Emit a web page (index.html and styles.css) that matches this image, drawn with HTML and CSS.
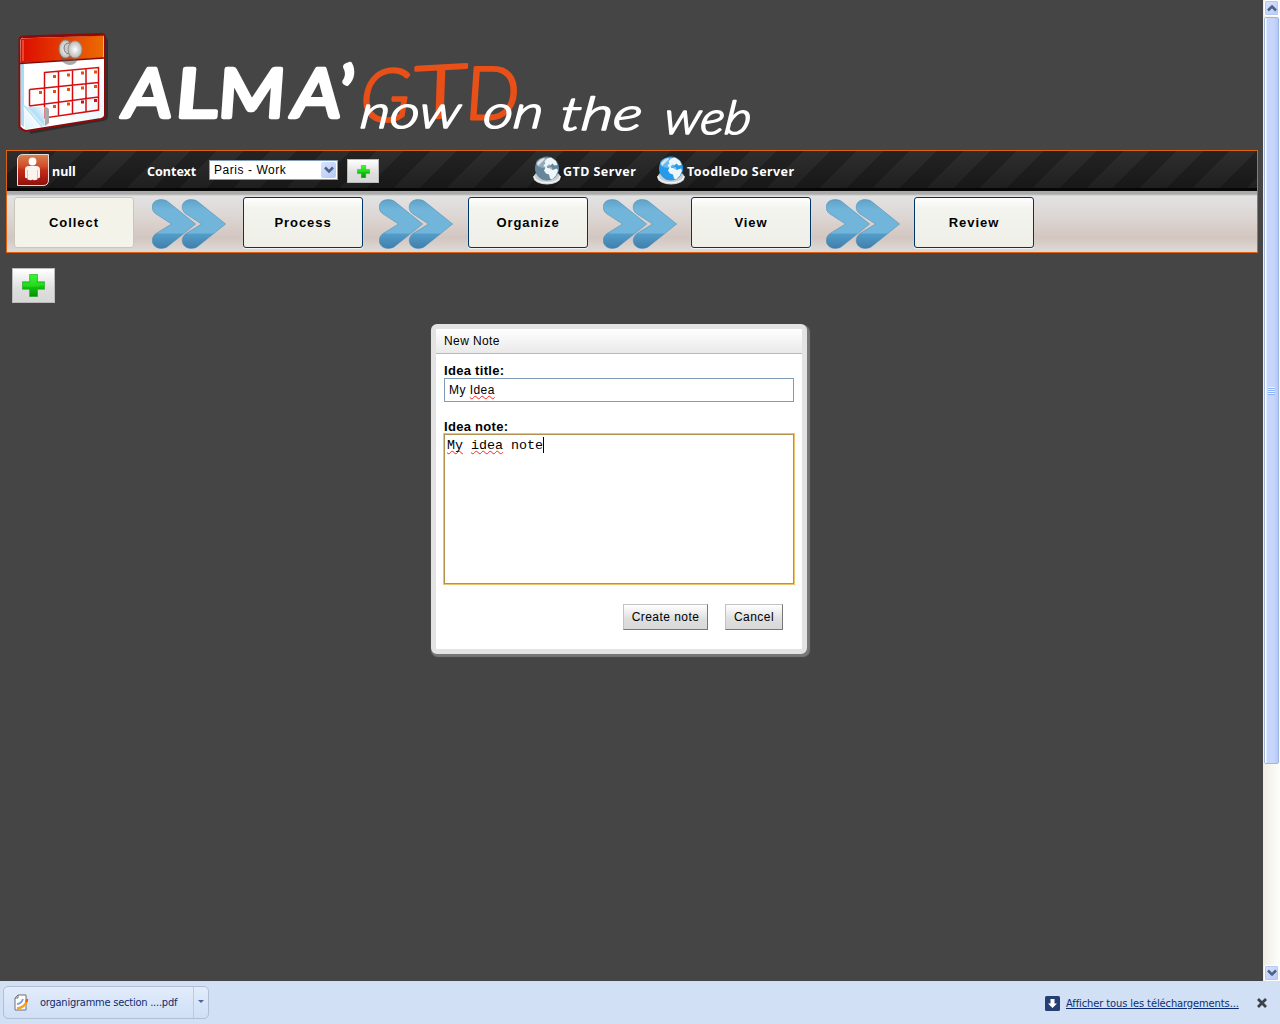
FILE: index.html
```html
<!DOCTYPE html>
<html lang="fr">
<head>
<meta charset="utf-8">
<title>ALMA'GTD</title>
<link rel="stylesheet" href="styles.css">
</head>
<body>
<svg class="defs" width="0" height="0" aria-hidden="true">
  <defs>
    <linearGradient id="green" x1="0" y1="0" x2="0" y2="1"><stop offset="0" stop-color="#34f52d"/><stop offset=".5" stop-color="#12cc0e"/><stop offset="1" stop-color="#078f05"/></linearGradient>
    <linearGradient id="blue" x1="0" y1="0" x2="0" y2="1"><stop offset="0" stop-color="#5fa3ca"/><stop offset=".2" stop-color="#72b5da"/><stop offset=".69" stop-color="#72b5da"/><stop offset=".7" stop-color="#539dca"/><stop offset="1" stop-color="#417fac"/></linearGradient>
    <symbol id="plus" viewBox="0 0 22 22"><path d="M7.3.5h7.5v7h6.700v7h-6.700v7H7.300v-7H.5v-7h6.800z" fill="url(#green)" stroke="#0ba60a" stroke-opacity=".55"/><path d="M8 1.500h6v7h7v2.500q-10 2-20 1v-3.500h7z" fill="#5cff50" opacity=".25"/></symbol>
    <symbol id="arrows" viewBox="0 0 74 50">
      <g fill="url(#blue)" stroke="#4c87ad" stroke-opacity=".5">
        <path d="M9 .6C-.5.600-2.500 10.500 4 15L19.500 25 4 34.500C-3 40 .5 49.400 9 49.400c4 0 6-1.300 8-3L43.600 25 17 3.600C15 1.800 13 .6 9 .6z"/>
        <path transform="translate(30)" d="M9 .6C-.5.600-2.500 10.500 4 15L19.500 25 4 34.500C-3 40 .5 49.400 9 49.400c4 0 6-1.300 8-3L43.600 25 17 3.600C15 1.800 13 .6 9 .6z"/>
      </g>
    </symbol>
    <symbol id="globe" viewBox="0 0 28 29">
      <ellipse cx="14" cy="21.500" rx="13.500" ry="7" fill="#c9ced2"/><path d="M1 20c1 9 25 9 26 0" fill="none" stroke="#f2f4f5" stroke-width="1.500"/>
      <circle cx="14" cy="12.500" r="12" fill="currentColor"/>
      <ellipse cx="11" cy="7" rx="8" ry="5" fill="#fff" opacity=".3"/>
      <path d="M14 2.500l4-1 5 3.500 1.500 4-3 .5-2-2-2 1.500-2-.5-2 2 1 1.500 4-.5 1.500 1.500 4-.5 1 2-2 5-4 4-2-1-1-4-3-1-2-3 1.500-3-2-2 2-2-1-2z" fill="#eef6f9"/>
      <path d="M4 7q3-4 7-5l1 1-4 4-3 3z" fill="#eaf5fa" opacity=".8"/>
      <path d="M16 12l3 .5 4-2 1 1.500-4 2z" fill="currentColor"/>
    </symbol>
    <symbol id="down" viewBox="0 0 10 8"><path d="M1 1.500l4 4 4-4" fill="none" stroke="#4d6185" stroke-width="2.500"/></symbol>
  </defs>
</svg>
<div class="viewport">
  <main class="page">
    <header class="banner">
      <svg width="800" height="150" viewBox="0 0 800 150">
        <defs>
          <linearGradient id="cal" x1="0" x2="1"><stop offset="0" stop-color="#dc0c00"/><stop offset="1" stop-color="#ec6b00"/></linearGradient>
          <linearGradient id="paper" x1="0" y1="0" x2="1" y2="1"><stop offset="0" stop-color="#fff"/><stop offset=".65" stop-color="#fff"/><stop offset="1" stop-color="#e5f4fd"/></linearGradient>
          <linearGradient id="curl" x1="0" y1="1" x2="1" y2="0"><stop offset="0" stop-color="#d8f0fc"/><stop offset=".45" stop-color="#f4fbff"/><stop offset=".6" stop-color="#b4def4"/><stop offset="1" stop-color="#fff"/></linearGradient>
          <radialGradient id="pin"><stop offset="0" stop-color="#fff"/><stop offset="1" stop-color="#b9b9b9"/></radialGradient>
        </defs>
        <path d="M23 38L103 36Q108 37 108 42V116Q108 120 103 121L30 134z" fill="#222" opacity=".65"/>
        <path d="M23 36.500L101 34Q105 34 105 38V115Q105 118 101 119L26 131Q22 130 19.500 127V40Q19.500 37 23 36.500z" fill="url(#paper)" stroke="#8e0a08" stroke-width="2"/>
        <path d="M20.500 64H24V127L21 125z" fill="#a7dcf6"/>
        <path d="M21 38.500L103.500 35.500V58L20.500 63z" fill="url(#cal)"/><path d="M20 63.500L104 58" stroke="#850909" stroke-width="1.500"/>
        <path d="M22.500 37.200L103 34.800" stroke="#8e0a08" stroke-width="2"/>
        <path d="M23 61V40" stroke="#f45b32" stroke-width="1.500"/>
        <path d="M44.500 72.500L98.500 67.500V110L44.500 118zM58.500 71V116M72.500 70V114M86 69V112M29.500 89.500L98.500 82.500M29.500 106L98.500 97M29.500 89.500V106M44.500 88V118" fill="none" stroke="#d40e0e" stroke-width="1.500"/>
        <path d="M53 75h3v3h-3zM67 73.500h3v3h-3zM81 71.500h3v3h-3zM94 70.500h3v3h-3zM39 91h3v3h-3zM53 90h3v3h-3zM67 88h3v3h-3zM81 86.500h3v3h-3zM94 85h3v3h-3zM53 105h3v3h-3zM67 102.500h3v3h-3z" fill="#e65008"/>
        <path d="M81 100.500h3v3h-3zM94 99h3v3h-3z" fill="#d01010"/>
        <path d="M45 107q5 0 4 6v10l-4 3z" fill="#aaa"/>
        <path d="M23.500 105q5 3 11 2h10v19L25 129z" fill="url(#curl)"/><path d="M23.500 105L42 127" stroke="#a6d9f3" stroke-width="1"/>
        <path d="M60 57q10 3 18 0-1 8-8 8t-10-8z" fill="#555" opacity=".5"/>
        <ellipse cx="65.500" cy="49" rx="6.500" ry="9" fill="url(#pin)" stroke="#888"/>
        <path d="M70 43q-6 0-6 5t5 6z" fill="#ccc" stroke="#777"/>
        <ellipse cx="75" cy="49.500" rx="7" ry="8.500" fill="url(#pin)" stroke="#929292"/>
        <g class="logo-alma">
          <text transform="translate(121 117) skewX(-8)" textLength="48" lengthAdjust="spacingAndGlyphs">A</text>
          <text transform="translate(174 117) skewX(-5)" textLength="42" lengthAdjust="spacingAndGlyphs">L</text>
          <text transform="translate(217 117) skewX(-4)" textLength="67" lengthAdjust="spacingAndGlyphs">M</text>
          <text transform="translate(290 117) skewX(-8)" textLength="48" lengthAdjust="spacingAndGlyphs">A</text>
          <text transform="translate(341 116)">’</text>
        </g>
        <g class="logo-gtd">
          <text transform="translate(357 121) skewX(-9)" textLength="50" lengthAdjust="spacingAndGlyphs">G</text>
          <text transform="translate(413 119) rotate(-3) skewX(-5)" textLength="53" lengthAdjust="spacingAndGlyphs">T</text>
          <text transform="translate(464 119) skewX(-4)" textLength="54" lengthAdjust="spacingAndGlyphs">D</text>
        </g>
        <g class="logo-script">
          <text transform="translate(359 128) skewX(-6)" textLength="100" lengthAdjust="spacingAndGlyphs">now</text>
          <text transform="translate(482 128) skewX(-6)" textLength="60" lengthAdjust="spacingAndGlyphs">on</text>
          <text transform="translate(559 130) skewX(-6)" textLength="82" lengthAdjust="spacingAndGlyphs">the</text>
          <text transform="translate(663 134) skewX(-6)" textLength="87" lengthAdjust="spacingAndGlyphs">web</text>
        </g>
      </svg>
    </header>
    <section class="panel">
      <div class="toolbar">
        <svg class="user" width="32" height="32" viewBox="0 0 32 32">
          <defs><linearGradient id="red" x1="0" y1="0" x2="0" y2="1"><stop offset="0" stop-color="#d98250"/><stop offset=".4" stop-color="#cf4a28"/><stop offset=".5" stop-color="#c52c1a"/><stop offset="1" stop-color="#8f100d"/></linearGradient></defs>
          <path d="M6 .5H31.500V26Q31.500 31.500 26 31.500H.5V6Q.5.500 6 .5z" fill="url(#red)" stroke="#e9dcd6"/>
          <circle cx="15.500" cy="7.500" r="3.900" fill="#fff"/><path d="M12 12h7q4 0 4 3.500V23q0 1.500-2.500 1v1.500q-4 1.500-5 0-1 1.500-5 0V24Q8 24.500 8 23v-7.500Q8 12 12 12z" fill="#fbf4ee"/><path d="M10.500 16v8M20.500 16v8" stroke="#dfa59a" stroke-width=".7"/>
        </svg>
        <span class="name">null</span>
        <span class="context">Context</span>
        <div class="select"><span>Paris - Work</span><i><svg width="10" height="8"><use href="#down"/></svg></i></div>
        <button class="push add-small"><svg width="13" height="13"><use href="#plus"/></svg></button>
        <svg class="globe gtd" width="28" height="29"><use href="#globe"/></svg>
        <span class="gtd-name">GTD Server</span>
        <svg class="globe toodle" width="28" height="29"><use href="#globe"/></svg>
        <span class="toodle-name">ToodleDo Server</span>
      </div>
      <nav class="steps">
        <button class="step current">Collect</button>
        <svg class="arrow" width="74" height="50"><use href="#arrows"/></svg>
        <button class="step">Process</button>
        <svg class="arrow" width="74" height="50"><use href="#arrows"/></svg>
        <button class="step">Organize</button>
        <svg class="arrow" width="74" height="50"><use href="#arrows"/></svg>
        <button class="step">View</button>
        <svg class="arrow" width="74" height="50"><use href="#arrows"/></svg>
        <button class="step">Review</button>
      </nav>
    </section>
    <button class="push add-big"><svg width="23" height="23"><use href="#plus"/></svg></button>
    <div class="dialog">
      <h2>New Note</h2>
      <div class="form">
        <label>Idea title:</label>
        <div class="field">My&nbsp;<span class="typo">Idea</span></div>
        <label>Idea note:</label>
        <div class="area"><span class="typo">My</span> <span class="typo">idea</span> <span class="last">note</span></div>
        <div class="actions"><button class="push create">Create note</button><button class="push cancel">Cancel</button></div>
      </div>
    </div>
  </main>
  <aside class="scrollbar">
    <div class="sb-btn"><svg class="up" width="10" height="8"><use href="#down"/></svg></div>
    <div class="thumb"><i></i></div>
    <div class="sb-btn"><svg width="10" height="8"><use href="#down"/></svg></div>
  </aside>
</div>
<footer class="shelf">
  <div class="download">
    <svg width="16" height="17" viewBox="0 0 16 17"><path d="M5 1h8v15H2V4z" fill="#fff" stroke="#6c7079"/><path d="M5 1v3H2" fill="none" stroke="#6c7079"/><path d="M4 10q4 0 6-5" fill="none" stroke="#6da5ea" stroke-width="2"/><path d="M4 14.500q8-1 10-8" fill="none" stroke="#ff9d16" stroke-width="2.500"/><path d="M13 8l1.500-3" stroke="#f05a10" stroke-width="2"/></svg>
    <span class="file">organigramme section ....pdf</span>
    <i class="more"></i>
  </div>
  <div class="all">
    <svg width="15" height="15" viewBox="0 0 15 15"><rect width="15" height="15" rx="1.500" fill="#263f73"/><path d="M5.500 3h4v4.500H12L7.500 12 3 7.500h2.500z" fill="#fff"/></svg>
    <a>Afficher tous les téléchargements...</a>
    <svg class="close" width="10" height="10" viewBox="0 0 10 10"><path d="M1 1l8 8M9 1L1 9" stroke="#3c4048" stroke-width="2.800"/></svg>
  </div>
</footer>
</body>
</html>
```
FILE: styles.css
```css
* { box-sizing: border-box; }
body { margin: 0; width: 1280px; height: 1024px; overflow: hidden; display: flex; flex-direction: column; font: 13px "Liberation Sans", Arial, sans-serif; color: #000; background: #454545; }
button { font: inherit; color: inherit; padding: 0; margin: 0; }
svg { display: block; flex: none; }
.defs { position: absolute; }
.viewport { height: 981px; display: flex; }
.page { position: relative; width: 1263px; background: #454545; }
.banner { height: 150px; }

.logo-alma { font: 400 67px Lato, sans-serif; fill: #fff; stroke: #fff; stroke-width: 4.5; stroke-linejoin: round; }
.logo-gtd { font: 300 73px Lato, sans-serif; fill: #e95018; stroke: #e95018; stroke-width: 2.8; stroke-linejoin: round; }
.logo-script { font: italic 300 46px Lato, sans-serif; fill: #fff; stroke: #fff; stroke-width: 1.6; stroke-linejoin: round; }

.panel { margin-left: 6px; width: 1252px; height: 103px; border: 1px solid #e0620e; }
.toolbar { height: 37px; display: flex; align-items: center; padding: 0 0 0 10px; color: #fff; font: bold 13px "Noto Sans", sans-serif;
  background: linear-gradient(rgba(0,0,0,0), rgba(0,0,0,.32)), repeating-linear-gradient(135deg, #2e2e2e 0 16.5px, #232323 16.500px 35.300px, #2e2e2e 35.300px 37.700px); }
.toolbar > span { white-space: nowrap; line-height: 18px; font-size: 12.500px; }
.user { margin-top: 1px; }
.name { margin-left: 3px; width: 95px; margin-top: 4px; }
.context { width: 62px; margin-top: 4px; }
.select { width: 129px; height: 20px; margin-top: 1px; border: 1px solid #7f9db9; background: #fff; color: #000; display: flex; align-items: center; justify-content: space-between; padding: 0 1px 0 4px; font: 12px "Liberation Sans", sans-serif; letter-spacing: .55px; }
.select i { width: 15px; height: 16px; border-radius: 2px; background: linear-gradient(135deg, #d7e2fe, #b4c8f6); display: flex; align-items: center; justify-content: center; }
.push { border: 1px solid; border-color: #c3c3c3 #777 #777 #c3c3c3; background: linear-gradient(#fff, #dedede 60%, #d8d8d8); display: flex; align-items: center; justify-content: center; }
.add-small { width: 32px; height: 24px; margin: 3px 0 0 9px; border-color: #bbb; }
.globe { margin-top: 1px; }
.gtd { margin-left: 154px; color: #66869b; }
.gtd-name { margin: 4px 0 0 2px; width: 93px; letter-spacing: .45px; }
.toodle { margin-left: 1px; color: #279be9; }
.toodle-name { margin: 4px 0 0 2px; letter-spacing: .4px; }

.steps { height: 64px; border-top: 3px solid #111; border-image: linear-gradient(#050505, #333 55%, #888) 3 0 0 0; background: linear-gradient(#aaa 0, #aaa 3px, #e2e2e2 5px, #ded9d7 35%, #d3c6c0 77%, #dcd7d4 96%); display: grid; grid-template-columns: 120px 109px 120px 105px 120px 103px 120px 103px 120px; align-items: start; justify-items: center; padding: 6px 0 0 7px; }
.step { width: 120px; height: 51px; border: 1px solid #003568; border-radius: 3px; background: linear-gradient(#fff, #f4f4ef 20%, #efefe8); font-weight: bold; letter-spacing: .95px; box-shadow: 0 1px 1px #f3f3f3; }
.current { border-color: #c9c7ba; background: #f3f3ea; box-shadow: none; }
.arrow { margin-top: 2px; }
.add-big { width: 43px; height: 35px; margin: 15px 0 0 12px; border-color: #bbb; }

.dialog { position: absolute; left: 431px; top: 324px; width: 376px; height: 330px; border: 5px solid #e3e3e3; border-radius: 6px; background: #fff; box-shadow: 1.500px 2px 1px 1px #777; }
.dialog h2 { margin: 0; height: 25px; padding-left: 8px; border-bottom: 1px solid #b9b9b9; background: linear-gradient(#fff, #e9e9e9); font: 12px/25px "Liberation Sans", sans-serif; letter-spacing: .4px; }
.form { padding: 9px 8px 0; display: flex; flex-direction: column; }
.form label { font-weight: bold; line-height: 15px; height: 15px; letter-spacing: .3px; }
.field { height: 24px; border: 1px solid #7f9db9; padding-left: 4px; line-height: 23px; font-size: 12px; letter-spacing: .45px; margin-bottom: 17px; }
.typo { text-decoration: underline wavy #f22 1px; text-underline-offset: 1px; text-decoration-skip-ink: none; }
.area { height: 152px; width: 352px; margin: -1px 0 0 -1px; border: 1px solid #f0c36b; outline: 1px solid #b2924e; outline-offset: -2px; padding: 3px; font: 13.333px/18px "Liberation Mono", monospace; }
.last { display: inline-block; height: 16px; line-height: 18px; border-right: 1px solid #000; vertical-align: top; }
.actions { display: flex; justify-content: flex-end; gap: 17px; padding: 19px 11px 0 0; }
.actions .push { height: 26px; font-size: 12px; letter-spacing: .45px; }
.create { width: 85px; }
.cancel { width: 58px; }

.scrollbar { width: 17px; background: linear-gradient(90deg, #eeede5, #fefefb); display: flex; flex-direction: column; }
.sb-btn { height: 16px; margin: 0 1px; border: 1px solid #fff; border-radius: 2px; background: linear-gradient(135deg, #d8e3ff, #b7caf8); box-shadow: inset 0 0 0 1px #b6c8ef; display: flex; align-items: center; justify-content: center; }
.up { transform: rotate(180deg); }
.thumb { height: 747px; margin: 1px 1px auto 1px; border: 1px solid #9fb5e0; border-radius: 2px; background: linear-gradient(90deg, #fff 0 1px, #c9d7fc 2px, #c6d5fd 65%, #b7c9f6); display: flex; align-items: center; justify-content: center; }
.thumb i { width: 7px; height: 8px; background: repeating-linear-gradient(#eef4fe 0 1px, #8cb0f8 1px 2px); }

.shelf { height: 43px; border-top: 1px solid #d7dde7; background: #d2e0f6; display: flex; justify-content: space-between; font: 11px "DejaVu Sans Condensed", "DejaVu Sans", sans-serif; color: #0d2d70; }
.download { margin: 4px 0 0 3px; width: 206px; height: 33px; border: 1px solid #b2bfd2; border-radius: 5px; background: linear-gradient(#e2ecfb, #d0dff5); display: flex; align-items: center; padding-left: 9px; }
.file { margin-left: 11px; width: 154px; height: 31px; line-height: 31px; border-right: 1px solid #bdcbe0; white-space: nowrap; letter-spacing: -.23px; }
.more { margin: 0 0 2px 4px; border: 3px solid transparent; border-top-color: #4866a2; border-bottom: 0; }
.all { height: 42px; display: flex; align-items: center; padding-right: 13px; }
.all a { margin-left: 6px; width: 173px; text-decoration: underline; white-space: nowrap; letter-spacing: -.09px; }
.close { margin-left: 18px; }
```
